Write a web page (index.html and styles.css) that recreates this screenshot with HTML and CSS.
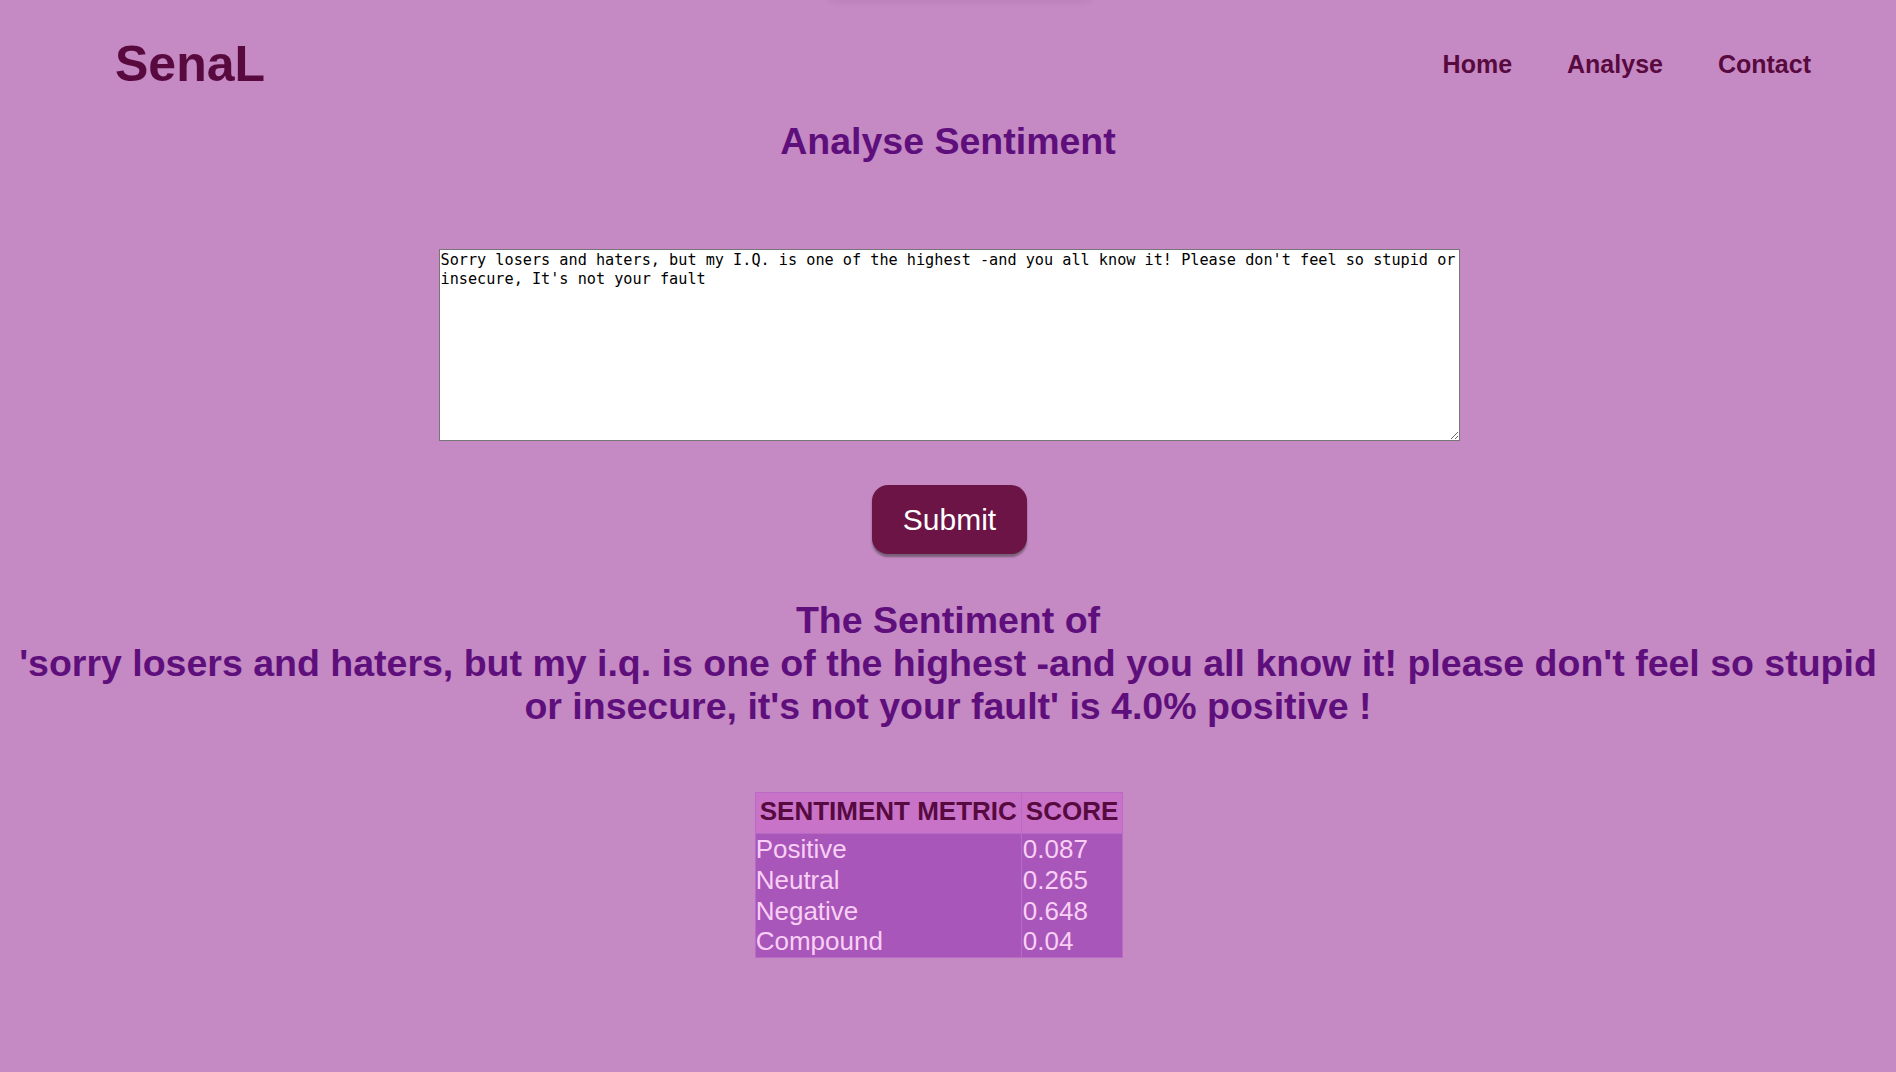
FILE: index.html
```html
<!DOCTYPE html>
<html lang="en">
<head>
<meta charset="utf-8">
<title>SenaL - Analyse Sentiment</title>
<link rel="stylesheet" href="styles.css">
</head>
<body>
<header class="topbar">
  <div class="logo">SenaL</div>
  <nav class="nav">
    <a class="nav-link" href="#">Home</a>
    <a class="nav-link" href="#">Analyse</a>
    <a class="nav-link" href="#">Contact</a>
  </nav>
</header>
<main class="main">
  <h1 class="title">Analyse Sentiment</h1>
  <form class="form">
    <textarea class="input">Sorry losers and haters, but my I.Q. is one of the highest -and you all know it! Please don't feel so stupid or insecure, It's not your fault</textarea>
    <button class="submit" type="button">Submit</button>
  </form>
  <h2 class="result">The Sentiment of<br>'sorry losers and haters, but my i.q. is one of the highest -and you all know it! please don't feel so stupid or insecure, it's not your fault' is 4.0% positive !</h2>
  <div class="table-wrap">
    <table class="scores">
      <thead>
        <tr><th>SENTIMENT METRIC</th><th>SCORE</th></tr>
      </thead>
      <tbody>
        <tr><td>Positive</td><td class="num">0.087</td></tr>
        <tr><td>Neutral</td><td class="num">0.265</td></tr>
        <tr><td>Negative</td><td class="num">0.648</td></tr>
        <tr><td>Compound</td><td class="num">0.04</td></tr>
      </tbody>
    </table>
  </div>
</main>
</body>
</html>
```

FILE: styles.css
```css
html, body {
  margin: 0;
  padding: 0;
}
body {
  background: #c589c4;
  font-family: "Liberation Sans", Arial, sans-serif;
  min-height: 1072px;
  position: relative;
}
body::before {
  content: "";
  position: absolute;
  top: -6px;
  left: 830px;
  width: 260px;
  height: 6px;
  box-shadow: 0 0 8px rgba(60, 0, 60, 0.12);
}
.topbar {
  display: flex;
  justify-content: space-between;
  align-items: center;
  padding: 35px 85px 0 115px;
}
.logo {
  font-size: 50px;
  font-weight: bold;
  color: #580a3f;
  line-height: 58px;
}
.nav {
  display: flex;
  gap: 55px;
  padding-top: 1px;
}
.nav-link {
  font-size: 25px;
  font-weight: bold;
  color: #580a3f;
  text-decoration: none;
}
.main {
  display: flex;
  flex-direction: column;
  align-items: center;
  padding: 0 8px;
}
.title {
  margin: 27px 0 0;
  font-size: 37.5px;
  font-weight: bold;
  color: #5e0f7c;
  line-height: 43px;
  text-align: center;
}
.form {
  display: flex;
  flex-direction: column;
  align-items: center;
  margin-top: 86px;
}
.input {
  box-sizing: border-box;
  width: 1021px;
  height: 192px;
  margin: 0 0 0 2px;
  padding: 1px 1px 1px;
  border: 1px solid #767676;
  background: #fff;
  color: #000;
  font-family: "DejaVu Sans Mono", "Liberation Mono", monospace;
  font-size: 15.2px;
  line-height: 19px;
  resize: vertical;
  display: block;
}
.submit {
  margin-top: 44px;
  margin-left: 3px;
  width: 155px;
  height: 69px;
  border: none;
  border-radius: 16px;
  background: #6b1445;
  color: #fff;
  font-family: "Liberation Sans", Arial, sans-serif;
  font-size: 30px;
  box-shadow: 0 3px 2px rgba(60, 60, 60, 0.55);
  cursor: pointer;
}
.result {
  margin: 45px 0 0;
  font-size: 37.5px;
  font-weight: bold;
  color: #5e0f7c;
  line-height: 43px;
  text-align: center;
}
.table-wrap {
  display: flex;
  justify-content: center;
  margin-top: 64px;
  padding-right: 18px;
}
.scores {
  border-collapse: collapse;
  border: 1px solid #b86ac4;
  font-size: 26px;
}
.scores th {
  background: #c873c8;
  color: #570a3f;
  font-weight: bold;
  text-align: left;
  padding: 3px 4px 7px;
  border: 1px solid #b86ac4;
  line-height: 30px;
}
.scores td {
  background: #a856b9;
  color: #f9cff5;
  padding: 0 2px 0 0;
  line-height: 30.75px;
  border-left: 1px solid #b86ac4;
  border-right: 1px solid #b86ac4;
}
.scores td.num {
  padding-left: 1px;
}
```
